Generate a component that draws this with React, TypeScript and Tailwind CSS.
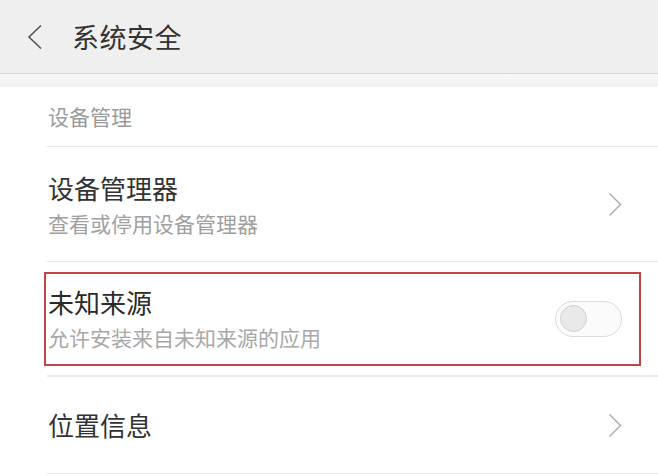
import React from 'react';

const font = { fontFamily: '"Noto Sans CJK SC", "Noto Sans", sans-serif' };

function ChevronRight() {
  return (
    <svg width="14" height="25" viewBox="0 0 14 25" fill="none" className="shrink-0">
      <polyline points="1.5,1.5 12.5,12.5 1.5,23.5" stroke="#a8a8a8" strokeWidth="1.4" />
    </svg>
  );
}

export default function App() {
  return (
    <div className="w-[658px] h-[476px] overflow-hidden bg-white" style={font}>
      <header className="h-[74px] bg-[#efefef] border-b border-[#d8d8d8] flex items-center">
        <svg width="16" height="26" viewBox="0 0 16 26" fill="none" className="ml-[27px]">
          <polyline points="14,1.5 2,13 14,24.5" stroke="#555" strokeWidth="1.6" />
        </svg>
        <h1 className="ml-[29px] text-[27px] leading-none text-[#333] tracking-[0.5px]">系统安全</h1>
      </header>
      <div className="h-[13px] bg-gradient-to-b from-[#f7f7f7] to-[#f1f1f1]" />

      <div className="ml-[47px]">
        <div className="h-[60px] flex items-center border-b border-[#e6e6e6]">
          <span className="text-[21px] leading-none text-[#9a9a9a] pl-px">设备管理</span>
        </div>

        <div className="h-[115px] flex items-center justify-between pr-[36px] border-b border-[#e6e6e6]">
          <div className="pl-px">
            <div className="text-[26px] leading-none text-[#333]">设备管理器</div>
            <div className="mt-[12px] text-[21px] leading-none text-[#a0a0a0]">查看或停用设备管理器</div>
          </div>
          <ChevronRight />
        </div>

        <div className="h-[115px] flex items-center border-b-2 border-[#ececec]">
          <div className="ml-[-3px] mr-[17px] flex-1 h-[94px] border-2 border-[#c44445] flex items-center justify-between pr-[17px]">
            <div className="pl-[2px]">
              <div className="text-[26px] leading-none text-[#2a2a2a]">未知来源</div>
              <div className="mt-[12px] text-[21px] leading-none text-[#a8a8a8]">允许安装来自未知来源的应用</div>
            </div>
            <div className="w-[67px] h-[36px] rounded-full border border-[#dcdcdc] bg-[#fbfbfb] flex items-center pl-[4px]">
              <div className="w-[27px] h-[27px] rounded-full bg-[#e9e9e9] border border-[#cfcfcf]" />
            </div>
          </div>
        </div>

        <div className="h-[97px] flex items-center justify-between pr-[36px] border-b border-[#e6e6e6]">
          <span className="text-[26px] leading-none text-[#333] pl-px">位置信息</span>
          <ChevronRight />
        </div>
      </div>
    </div>
  );
}
